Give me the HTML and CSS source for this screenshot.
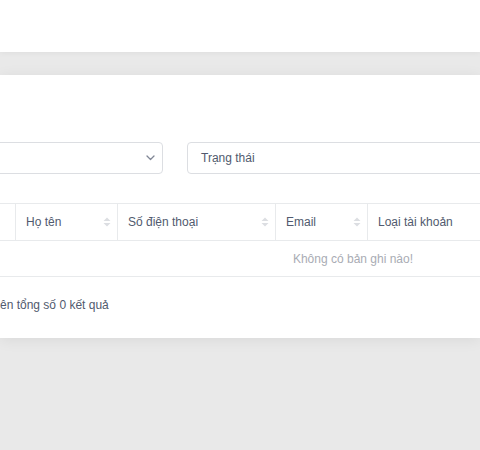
FILE: index.html
```html
<!DOCTYPE html>
<html lang="vi">
<head>
<meta charset="utf-8">
<title>Danh sách tài khoản</title>
<link rel="stylesheet" href="styles.css">
</head>
<body>
  <header class="topbar"></header>
  <main class="page">
    <section class="card">
      <div class="inner">
        <div class="filters">
          <div class="select">
            <span class="sel-text"></span>
            <svg class="chevron" width="9" height="6" viewBox="0 0 9 6"><path d="M1 1 L4.5 4.5 L8 1" fill="none" stroke="#808695" stroke-width="1.3" stroke-linecap="round" stroke-linejoin="round"/></svg>
          </div>
          <div class="select">
            <span class="sel-text">Trạng thái</span>
          </div>
        </div>

        <div class="table">
          <div class="thead">
            <div class="th"></div>
            <div class="th"><span>Họ tên</span><svg class="sort" width="8" height="10" viewBox="0 0 8 10"><path d="M0.5 4 L4 0.5 L7.5 4 Z M0.5 6 L4 9.5 L7.5 6 Z" fill="#dcdee2"/></svg></div>
            <div class="th"><span>Số điện thoại</span><svg class="sort" width="8" height="10" viewBox="0 0 8 10"><path d="M0.5 4 L4 0.5 L7.5 4 Z M0.5 6 L4 9.5 L7.5 6 Z" fill="#dcdee2"/></svg></div>
            <div class="th"><span>Email</span><svg class="sort" width="8" height="10" viewBox="0 0 8 10"><path d="M0.5 4 L4 0.5 L7.5 4 Z M0.5 6 L4 9.5 L7.5 6 Z" fill="#dcdee2"/></svg></div>
            <div class="th last"><span>Loại tài khoản</span></div>
          </div>
          <div class="empty">Không có bản ghi nào!</div>
        </div>

        <div class="footer">ên tổng số 0 kết quả</div>
      </div>
    </section>
  </main>
</body>
</html>
```
FILE: styles.css
```css
html, body {
  margin: 0;
  padding: 0;
}
body {
  background: #e9e9e9;
  font-family: "Liberation Sans", Arial, Helvetica, sans-serif;
  font-size: 12px;
  color: #515a6e;
  height: 450px;
  overflow: hidden;
}
.topbar {
  height: 52px;
  background: #ffffff;
  box-shadow: 0 1px 6px rgba(0, 0, 0, 0.05);
  position: relative;
  z-index: 2;
}
.page {
  padding-top: 23px;
}
.card {
  background: #ffffff;
  height: 263px;
  overflow: hidden;
  box-shadow: 0 2px 14px rgba(0, 0, 0, 0.07);
  position: relative;
  z-index: 1;
}
.inner {
  margin-left: -140px;
  width: 986px;
  padding-top: 67px;
}
.filters {
  display: grid;
  grid-template-columns: 303px 303px 303px;
  column-gap: 24px;
}
.select {
  box-sizing: border-box;
  height: 32px;
  border: 1px solid #dcdee2;
  border-radius: 4px;
  display: flex;
  align-items: center;
  justify-content: space-between;
  padding: 0 7px 0 13px;
  background: #fff;
}
.sel-text {
  color: #515a6e;
  line-height: 16px;
}
.chevron {
  display: block;
}
.table {
  margin-top: 29px;
}
.thead {
  display: grid;
  grid-template-columns: 156px 102px 158px 92px 1fr;
  border-top: 1px solid #e8eaec;
  border-bottom: 1px solid #e8eaec;
  height: 36px;
}
.th {
  box-sizing: border-box;
  border-right: 1px solid #e8eaec;
  display: flex;
  align-items: center;
  justify-content: space-between;
  padding: 0 6px 0 10px;
  color: #515a6e;
  line-height: 16px;
}
.th.last {
  border-right: none;
}
.sort {
  display: block;
}
.empty {
  height: 35px;
  border-bottom: 1px solid #e8eaec;
  display: flex;
  align-items: center;
  justify-content: center;
  color: #a9acb4;
}
.footer {
  margin-top: 20px;
  margin-left: 140px;
  line-height: 16px;
  color: #515a6e;
}
```
